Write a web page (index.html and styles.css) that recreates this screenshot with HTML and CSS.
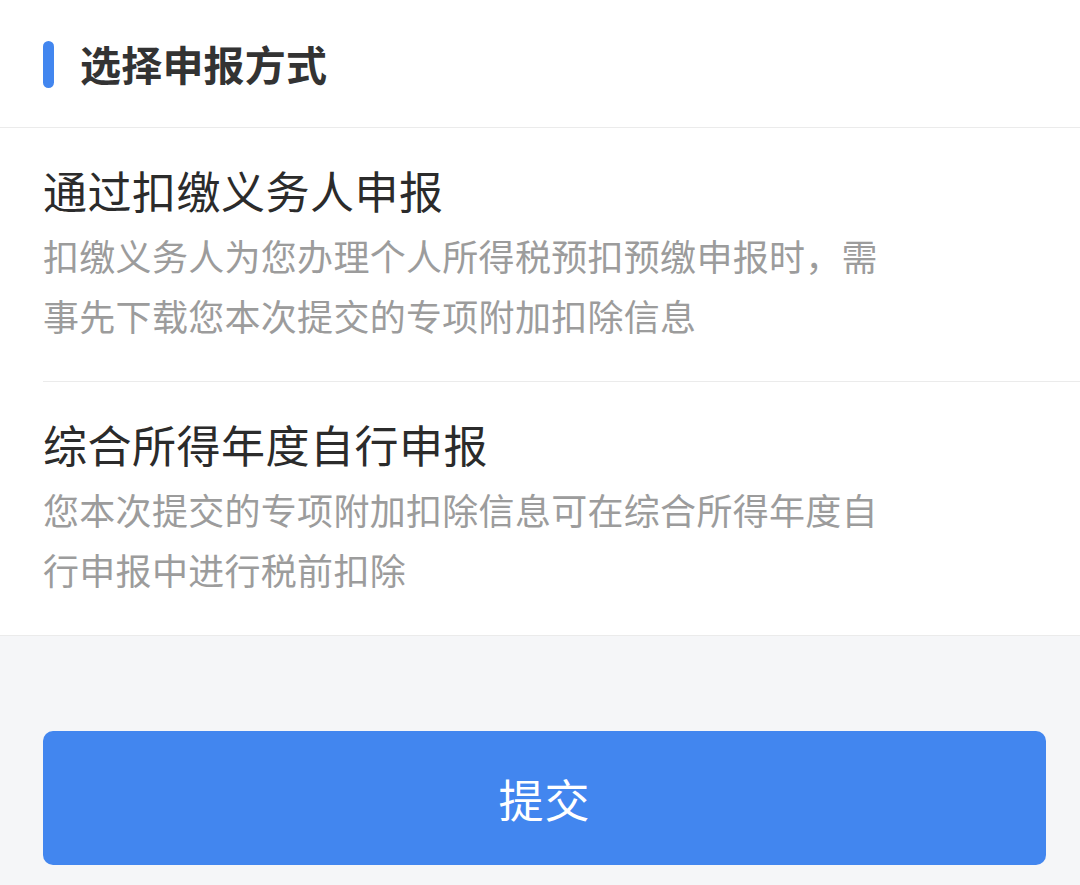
FILE: index.html
```html
<!DOCTYPE html>
<html lang="zh-CN">
<head>
  <meta charset="UTF-8" />
  <meta name="viewport" content="width=device-width, initial-scale=1.0"/>
  <title>选择申报方式</title>
  <link rel="stylesheet" href="styles.css">
</head>
<body>
  <header class="head">
    <span class="head-bar"></span>
    <h1>选择申报方式</h1>
  </header>

  <section class="list">
    <div class="item">
      <h2>通过扣缴义务人申报</h2>
      <p>扣缴义务人为您办理个人所得税预扣预缴申报时，需事先下载您本次提交的专项附加扣除信息</p>
    </div>
    <div class="item">
      <h2>综合所得年度自行申报</h2>
      <p>您本次提交的专项附加扣除信息可在综合所得年度自行申报中进行税前扣除</p>
    </div>
  </section>

  <div class="actions">
    <button class="submit-btn">提交</button>
  </div>
</body>
</html>
```

FILE: styles.css
```css
:root {
  --blue: #4286ef;
  --text: #2b2b2b;
  --gray: #9c9c9c;
  --line: #ebebeb;
  --bg: #f5f6f8;
}

* {
  margin: 0;
  padding: 0;
  box-sizing: border-box;
  font-family: 'Noto Sans CJK SC', 'Noto Sans', sans-serif;
}

body {
  background: var(--bg);
  width: 1080px;
  height: 885px;
  overflow: hidden;
}

.head {
  height: 128px;
  background: #fff;
  border-bottom: 1px solid var(--line);
  display: flex;
  align-items: center;
  padding-left: 43px;
  gap: 26px;
}
.head-bar {
  width: 11px;
  height: 47px;
  border-radius: 6px;
  background: var(--blue);
  margin-top: 2px;
}
.head h1 {
  font-size: 41px;
  font-weight: 700;
  color: #333;
  line-height: 1;
  letter-spacing: 0.2px;
}

.list {
  background: #fff;
  padding-left: 43px;
  border-bottom: 1px solid var(--line);
}
.item {
  padding: 32px 0 36px;
  border-bottom: 1px solid var(--line);
}
.item:last-child {
  border-bottom: none;
}
.item h2 {
  font-size: 44px;
  font-weight: 400;
  line-height: 60px;
  letter-spacing: 0.5px;
  color: var(--text);
}
.item p {
  margin-top: 5px;
  width: 860px;
  font-size: 36px;
  line-height: 60px;
  letter-spacing: 0.3px;
  color: var(--gray);
}

.actions {
  padding: 95px 34px 0 43px;
}
.submit-btn {
  width: 1003px;
  height: 134px;
  border: none;
  border-radius: 10px;
  background: var(--blue);
  color: #fff;
  font-size: 45px;
  letter-spacing: 1px;
}
```
